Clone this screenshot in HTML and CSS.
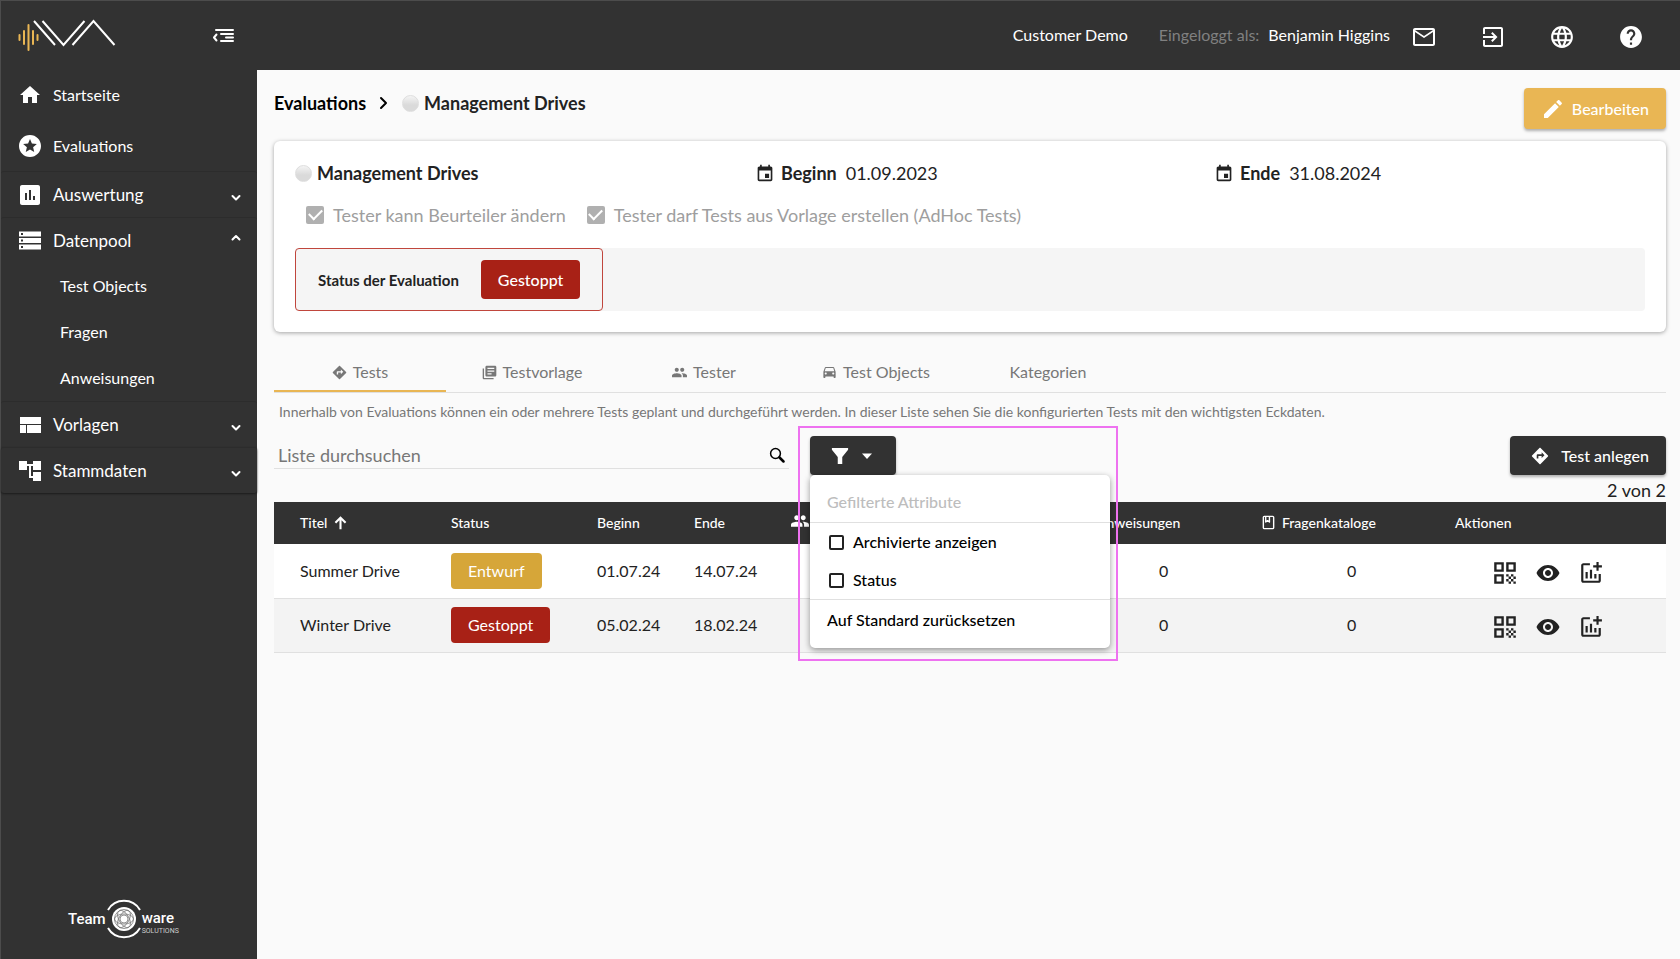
FILE: index.html
```html
<!DOCTYPE html>
<html lang="de">
<head>
<meta charset="utf-8">
<meta name="viewport" content="width=device-width, initial-scale=1">
<title>Management Drives – Evaluations</title>
<link rel="stylesheet" href="styles.css">
</head>
<body>
<svg class="sprite" aria-hidden="true">
  <symbol id="i-home" viewBox="0 0 24 24"><path d="M10 20v-6h4v6h5v-8h3L12 3 2 12h3v8z"/></symbol>
  <symbol id="i-star" viewBox="0 0 24 24"><path d="M11.99 1C5.900 1 1 5.900 1 12s4.900 11 10.990 11C18.080 23 23 18.080 23 12S18.080 1 11.990 1zm4.240 17L12 15.450 7.770 18l1.120-4.810-3.730-3.230 4.920-.42L12 5l1.920 4.530 4.920.42-3.730 3.230L16.230 18z"/></symbol>
  <symbol id="i-chart" viewBox="0 0 24 24"><path d="M20 2H4c-1.100 0-2 .9-2 2v16c0 1.100.9 2 2 2h16c1.100 0 2-.9 2-2V4c0-1.100-.9-2-2-2zM9 17H7v-7h2v7zm4 0h-2V7h2v10zm4 0h-2v-4h2v4z"/></symbol>
  <symbol id="i-storage" viewBox="0 0 24 24"><path d="M1 20.500h22v-5H1v5zm2-3.500h2v2H3v-2zM1 2.500v5h22v-5H1zM5 6H3V4h2v2zM1 14h22V9H1v5zm2-3.500h2v2H3v-2z"/></symbol>
  <symbol id="i-quilt" viewBox="0 0 24 24"><path d="M2 4h21v7H2zM2 12h6v8H2zM9 12h14v8H9z"/></symbol>
  <symbol id="i-tree" viewBox="0 0 24 24"><path d="M23 11V2h-8v3H9V2H1v9h8V7h2v12h4v3h8v-9h-8v4h-2V7h2v4z"/></symbol>
  <symbol id="i-down" viewBox="0 0 12 20"><path class="line" d="M2.500 11L6 14.500 9.500 11"/></symbol>
  <symbol id="i-up" viewBox="0 0 12 20"><path class="line" d="M2.500 8.500L6 5l3.500 3.500"/></symbol>
  <symbol id="i-collapse" viewBox="0 0 24 24"><path class="line" d="M4 7h17M9 11h12M14 14.500h7M9 18h12M4.500 11.500L2 14.500 4.500 17.500"/></symbol>
  <symbol id="i-mail" viewBox="0 0 24 24"><path d="M23 5c0-1.100-.9-2-2-2H3c-1.100 0-2 .9-2 2v14c0 1.100.9 2 2 2h18c1.100 0 2-.9 2-2V5zm-2 0l-9 6-9-6h18zm0 14H3V7l9 6 9-6v12z"/></symbol>
  <symbol id="i-exit" viewBox="0 0 24 24"><path d="M10.090 15.590L11.500 17l5-5-5-5-1.410 1.410L12.670 11H2v2h10.670l-2.580 2.590zM20 2H4c-1.110 0-2 .9-2 2v5h2V4h16v16H4v-5H2v5c0 1.100.89 2 2 2h16c1.100 0 2-.9 2-2V4c0-1.100-.9-2-2-2z"/></symbol>
  <symbol id="i-globe" viewBox="1 1 22 22"><path d="M11.990 2C6.470 2 2 6.480 2 12s4.470 10 9.990 10C17.520 22 22 17.520 22 12S17.520 2 11.990 2zm6.930 6h-2.950c-.32-1.250-.78-2.450-1.380-3.560 1.840.63 3.370 1.910 4.330 3.560zM12 4.040c.83 1.200 1.480 2.530 1.910 3.960h-3.820c.43-1.430 1.080-2.760 1.910-3.960zM4.260 14C4.100 13.360 4 12.690 4 12s.1-1.360.26-2h3.380c-.08.66-.14 1.320-.14 2 0 .68.06 1.340.14 2H4.260zm.82 2h2.950c.32 1.250.78 2.450 1.380 3.560-1.840-.63-3.370-1.900-4.330-3.560zm2.950-8H5.080c.96-1.660 2.490-2.930 4.330-3.560C8.810 5.550 8.350 6.750 8.030 8zM12 19.960c-.83-1.200-1.480-2.530-1.910-3.960h3.820c-.43 1.430-1.080 2.760-1.910 3.960zM14.340 14H9.660c-.09-.66-.16-1.320-.16-2 0-.68.07-1.350.16-2h4.680c.09.65.16 1.320.16 2 0 .68-.07 1.340-.16 2zm.25 5.560c.6-1.110 1.060-2.310 1.380-3.560h2.950c-.96 1.650-2.490 2.930-4.330 3.560zM16.360 14c.08-.66.14-1.320.14-2 0-.68-.06-1.340-.14-2h3.380c.16.64.26 1.310.26 2s-.1 1.360-.26 2h-3.380z"/></symbol>
  <symbol id="i-help" viewBox="1 1 22 22"><path d="M12 2C6.480 2 2 6.480 2 12s4.480 10 10 10 10-4.480 10-10S17.520 2 12 2zm1 17h-2v-2h2v2zm2.070-7.750l-.9.92C13.450 12.900 13 13.500 13 15h-2v-.5c0-1.100.45-2.100 1.170-2.830l1.240-1.260c.37-.36.59-.86.59-1.410 0-1.100-.9-2-2-2s-2 .9-2 2H8c0-2.210 1.790-4 4-4s4 1.790 4 4c0 .88-.36 1.680-.93 2.250z"/></symbol>
  <symbol id="i-edit" viewBox="0 0 24 24"><path d="M3 17.250V21h3.750L17.810 9.940l-3.750-3.750L3 17.250zM20.710 7.040c.39-.39.39-1.020 0-1.410l-2.340-2.340c-.39-.39-1.020-.39-1.410 0l-1.830 1.830 3.750 3.750 1.830-1.830z"/></symbol>
  <symbol id="i-event" viewBox="1 0 22 22"><path d="M17 12h-5v5h5v-5zM16 1v2H8V1H6v2H5c-1.110 0-1.990.9-1.990 2L3 19c0 1.100.89 2 2 2h14c1.100 0 2-.9 2-2V5c0-1.100-.9-2-2-2h-1V1h-2zm3 18H5V8h14v11z"/></symbol>
  <symbol id="i-directions" viewBox="1 1 22 22"><path d="M21.710 11.290l-9-9c-.39-.39-1.020-.39-1.410 0l-9 9c-.39.39-.39 1.020 0 1.410l9 9c.39.39 1.020.39 1.410 0l9-9c.39-.38.39-1.010 0-1.410zM14 14.500V12h-4v3H8v-4c0-.55.45-1 1-1h5V7.500l3.500 3.500-3.500 3.500z"/></symbol>
  <symbol id="i-books" viewBox="1 1 22 22"><path d="M4 6H2v14c0 1.100.9 2 2 2h14v-2H4V6zm16-4H8c-1.100 0-2 .9-2 2v12c0 1.100.9 2 2 2h12c1.100 0 2-.9 2-2V4c0-1.100-.9-2-2-2zm-1 9H9V9h10v2zm-4 4H9v-2h6v2zm4-8H9V5h10v2z"/></symbol>
  <symbol id="i-people" viewBox="1 1 22 22"><path d="M16 11c1.660 0 2.990-1.340 2.990-3S17.660 5 16 5c-1.660 0-3 1.340-3 3s1.340 3 3 3zm-8 0c1.660 0 2.990-1.340 2.990-3S9.660 5 8 5C6.340 5 5 6.340 5 8s1.340 3 3 3zm0 2c-2.330 0-7 1.170-7 3.500V19h14v-2.500c0-2.330-4.670-3.500-7-3.500zm8 0c-.29 0-.62.02-.97.05 1.160.84 1.970 1.970 1.970 3.450V19h6v-2.500c0-2.330-4.670-3.500-7-3.500z"/></symbol>
  <symbol id="i-car" viewBox="1 2 22 22"><path d="M18.920 6.010C18.720 5.420 18.160 5 17.500 5h-11c-.66 0-1.210.42-1.420 1.010L3 12v8c0 .55.45 1 1 1h1c.55 0 1-.45 1-1v-1h12v1c0 .55.45 1 1 1h1c.55 0 1-.45 1-1v-8l-2.080-5.990zM6.500 16c-.83 0-1.500-.67-1.500-1.500S5.670 13 6.500 13s1.500.67 1.500 1.500S7.330 16 6.500 16zm11 0c-.83 0-1.500-.67-1.500-1.500s.67-1.500 1.500-1.500 1.500.67 1.500 1.500-.67 1.500-1.500 1.500zM5 11l1.500-4.500h11L19 11H5z"/></symbol>
  <symbol id="i-search" viewBox="0 0 16 16"><circle class="line thin" cx="6.500" cy="6.500" r="4.900"/><path class="line thick" d="M10.500 10.500L14.500 14.500"/></symbol>
  <symbol id="i-funnel" viewBox="0 0 20 20"><path d="M1 1h18v2l-6.500 8v8h-5v-8L1 3z"/></symbol>
  <symbol id="i-caret" viewBox="0 0 12 12"><path d="M1 3.500h10L6 9z"/></symbol>
  <symbol id="i-eye" viewBox="0 0 24 24"><path d="M12 4C7 4 2.500 7.400.5 12c2 4.600 6.500 8 11.500 8s9.500-3.400 11.500-8C21.500 7.400 17 4 12 4zM12 17c-2.760 0-5-2.240-5-5s2.240-5 5-5 5 2.240 5 5-2.240 5-5 5zm0-8c-1.660 0-3 1.340-3 3s1.340 3 3 3 3-1.340 3-3-1.340-3-3-3z"/></symbol>
  <symbol id="i-qr" viewBox="2 2 20 20"><path d="M3 11h8V3H3v8zm2-6h4v4H5V5zM3 21h8v-8H3v8zm2-6h4v4H5v-4zM13 3v8h8V3h-8zm6 6h-4V5h4v4zM19 19h2v2h-2zM13 13h2v2h-2zM15 15h2v2h-2zM13 17h2v2h-2zM15 19h2v2h-2zM17 17h2v2h-2zM17 13h2v2h-2zM19 15h2v2h-2z"/></symbol>
  <symbol id="i-addchart" viewBox="1 1 22 22"><path d="M22 5v2h-3v3h-2V7h-3V5h3V2h2v3h3zm-3 14H5V5h6V3H5c-1.100 0-2 .9-2 2v14c0 1.100.9 2 2 2h14c1.100 0 2-.9 2-2v-6h-2v6zm-4-6v4h2v-4h-2zm-4 4h2V9h-2v8zm-2 0v-6H7v6h2z"/></symbol>
  <symbol id="i-arrowup" viewBox="3 3 18 18"><path d="M5 11.500l1.800 1.800L10.750 9.300V20h2.500V9.300l3.950 4L19 11.500l-7-7z"/></symbol>
  <symbol id="i-book" viewBox="0 0 16 16"><rect class="line thin" x="2.500" y="1.500" width="11" height="13" rx="1"/><path class="line thin" d="M5 2v5.500l2-1.500 2 1.500V2"/></symbol>
  <symbol id="i-crumb" viewBox="0 0 12 16"><path class="line" d="M3 3l5 5-5 5"/></symbol>
</svg>

<div class="app">
  <aside class="sidebar">
    <div class="brand">
      <svg class="brand-logo" viewBox="0 0 98 32" role="img" aria-label="IVVA">
        <path class="wave" d="M1.500 16v5M6 12v13M10.500 6v25M15 12v13M19.500 16v5"/>
        <path class="strokes" d="M16 2l21 24M24.500 2l21 24 21-24M54.500 26l21-24 21 24"/>
      </svg>
      <button class="icon-btn" type="button" aria-label="Menü einklappen"><svg class="icon"><use href="#i-collapse"/></svg></button>
    </div>
    <nav class="nav">
      <a class="nav-item tall" href="#"><svg class="icon"><use href="#i-home"/></svg><span>Startseite</span></a>
      <a class="nav-item tall" href="#"><svg class="icon"><use href="#i-star"/></svg><span>Evaluations</span></a>
      <a class="nav-item group" href="#"><svg class="icon"><use href="#i-chart"/></svg><span>Auswertung</span><svg class="chev"><use href="#i-down"/></svg></a>
      <a class="nav-item group" href="#"><svg class="icon"><use href="#i-storage"/></svg><span>Datenpool</span><svg class="chev"><use href="#i-up"/></svg></a>
      <a class="nav-item sub" href="#">Test Objects</a>
      <a class="nav-item sub" href="#">Fragen</a>
      <a class="nav-item sub" href="#">Anweisungen</a>
      <a class="nav-item group" href="#"><svg class="icon"><use href="#i-quilt"/></svg><span>Vorlagen</span><svg class="chev"><use href="#i-down"/></svg></a>
      <a class="nav-item group last" href="#"><svg class="icon"><use href="#i-tree"/></svg><span>Stammdaten</span><svg class="chev"><use href="#i-down"/></svg></a>
    </nav>
    <div class="maker">
      <span class="maker-word">Team</span>
      <svg class="maker-logo" viewBox="2 0 36 42" aria-hidden="true">
        <path class="arc" d="M4 12a18.500 18.500 0 0 1 32 0M4 30a18.500 18.500 0 0 0 32 0"/>
        <circle class="ball" cx="20" cy="21" r="12"/>
        <g class="orbit"><circle cx="20" cy="21" r="9.500"/><circle cx="20" cy="21" r="4"/><ellipse cx="20" cy="21" rx="9.500" ry="5"/><ellipse cx="20" cy="21" rx="9.500" ry="5" transform="rotate(60 20 21)"/><ellipse cx="20" cy="21" rx="9.500" ry="5" transform="rotate(120 20 21)"/></g>
      </svg>
      <span class="maker-end"><span class="maker-word">ware</span><small>SOLUTIONS</small></span>
    </div>
  </aside>

  <div class="page">
    <header class="topbar">
      <span class="customer">Customer Demo</span>
      <span class="login"><span class="muted">Eingeloggt als:</span> <span>Benjamin Higgins</span></span>
      <div class="top-icons">
        <button class="icon-btn" type="button" aria-label="Nachrichten"><svg class="icon"><use href="#i-mail"/></svg></button>
        <button class="icon-btn" type="button" aria-label="Abmelden"><svg class="icon"><use href="#i-exit"/></svg></button>
        <button class="icon-btn" type="button" aria-label="Sprache"><svg class="icon"><use href="#i-globe"/></svg></button>
        <button class="icon-btn" type="button" aria-label="Hilfe"><svg class="icon"><use href="#i-help"/></svg></button>
      </div>
    </header>

    <main class="content">
      <div class="page-head">
        <nav class="crumbs">
          <a href="#">Evaluations</a>
          <svg class="crumb-sep"><use href="#i-crumb"/></svg>
          <span class="named"><i class="dot"></i>Management Drives</span>
        </nav>
        <button class="btn btn-gold" type="button"><svg class="icon"><use href="#i-edit"/></svg>Bearbeiten</button>
      </div>

      <section class="card">
        <div class="facts">
          <h1 class="named"><i class="dot"></i>Management Drives</h1>
          <div class="fact"><svg class="icon-sm"><use href="#i-event"/></svg><b>Beginn</b><span>01.09.2023</span></div>
          <div class="fact"><svg class="icon-sm"><use href="#i-event"/></svg><b>Ende</b><span>31.08.2024</span></div>
        </div>
        <div class="options">
          <label class="check off"><input type="checkbox" checked disabled>Tester kann Beurteiler ändern</label>
          <label class="check off"><input type="checkbox" checked disabled>Tester darf Tests aus Vorlage erstellen (AdHoc Tests)</label>
        </div>
        <div class="status-strip">
          <div class="status-box"><b>Status der Evaluation</b><button class="status red" type="button">Gestoppt</button></div>
        </div>
      </section>

      <nav class="tabs">
        <a class="tab active" href="#"><svg class="icon-xs"><use href="#i-directions"/></svg>Tests</a>
        <a class="tab" href="#"><svg class="icon-xs"><use href="#i-books"/></svg>Testvorlage</a>
        <a class="tab" href="#"><svg class="icon-xs"><use href="#i-people"/></svg>Tester</a>
        <a class="tab" href="#"><svg class="icon-xs"><use href="#i-car"/></svg>Test Objects</a>
        <a class="tab" href="#">Kategorien</a>
      </nav>
      <p class="hint">Innerhalb von Evaluations können ein oder mehrere Tests geplant und durchgeführt werden. In dieser Liste sehen Sie die konfigurierten Tests mit den wichtigsten Eckdaten.</p>

      <div class="toolbar">
        <div class="search">
          <input type="search" placeholder="Liste durchsuchen" aria-label="Liste durchsuchen">
          <svg class="icon-sm"><use href="#i-search"/></svg>
        </div>
        <div class="filter">
          <button class="btn btn-dark btn-filter" type="button" aria-label="Filter" aria-expanded="true"><svg class="icon-sm"><use href="#i-funnel"/></svg><svg class="chev"><use href="#i-caret"/></svg></button>
          <div class="filter-menu">
            <div class="menu-title">Gefilterte Attribute</div>
            <div class="menu-group">
              <label class="check"><input type="checkbox">Archivierte anzeigen</label>
              <label class="check"><input type="checkbox">Status</label>
            </div>
            <button class="menu-reset" type="button">Auf Standard zurücksetzen</button>
          </div>
          <div class="filter-outline"></div>
        </div>
        <div class="create">
          <button class="btn btn-dark" type="button"><svg class="icon-sm"><use href="#i-directions"/></svg>Test anlegen</button>
          <div class="count">2 von 2</div>
        </div>
      </div>

      <table class="tests">
        <colgroup><col class="c-title"><col class="c-status"><col class="c-date"><col class="c-date"><col class="c-tester"><col class="c-instr"><col class="c-cat"><col class="c-act"></colgroup>
        <thead>
          <tr>
            <th>Titel<svg class="icon-xs after"><use href="#i-arrowup"/></svg></th>
            <th>Status</th>
            <th>Beginn</th>
            <th>Ende</th>
            <th><svg class="icon-sm before"><use href="#i-people"/></svg>Tester</th>
            <th><svg class="icon-sm before"><use href="#i-directions"/></svg>Anweisungen</th>
            <th><svg class="icon-xs before"><use href="#i-book"/></svg>Fragenkataloge</th>
            <th>Aktionen</th>
          </tr>
        </thead>
        <tbody>
          <tr>
            <td>Summer Drive</td><td><button class="status gold" type="button">Entwurf</button></td><td>01.07.24</td><td>14.07.24</td><td></td><td class="num">0</td><td class="num">0</td>
            <td><div class="actions"><button class="icon-btn" type="button" aria-label="QR-Code"><svg class="icon"><use href="#i-qr"/></svg></button><button class="icon-btn" type="button" aria-label="Ansehen"><svg class="icon"><use href="#i-eye"/></svg></button><button class="icon-btn" type="button" aria-label="Auswertung anlegen"><svg class="icon"><use href="#i-addchart"/></svg></button></div></td>
          </tr>
          <tr>
            <td>Winter Drive</td><td><button class="status red" type="button">Gestoppt</button></td><td>05.02.24</td><td>18.02.24</td><td></td><td class="num">0</td><td class="num">0</td>
            <td><div class="actions"><button class="icon-btn" type="button" aria-label="QR-Code"><svg class="icon"><use href="#i-qr"/></svg></button><button class="icon-btn" type="button" aria-label="Ansehen"><svg class="icon"><use href="#i-eye"/></svg></button><button class="icon-btn" type="button" aria-label="Auswertung anlegen"><svg class="icon"><use href="#i-addchart"/></svg></button></div></td>
          </tr>
        </tbody>
      </table>
    </main>
  </div>
</div>
</body>
</html>
```
FILE: styles.css
```css
:root {
  --dark: #323232;
  --gold: #e9b654;
  --red: #a82116;
  --line: #e0e0e0;
  --grey: #777;
}
* { box-sizing: border-box; }
body {
  margin: 0;
  background: #fafafa;
  color: #222;
  font: 16px/24px Lato, "Open Sans", sans-serif;
}
a { color: inherit; text-decoration: none; }
button { font: inherit; color: inherit; cursor: pointer; border: 0; background: none; padding: 0; }
.sprite { position: absolute; width: 0; height: 0; }
svg { display: block; flex: none; fill: currentColor; }
.line { fill: none; stroke: currentColor; stroke-width: 2; stroke-linecap: round; stroke-linejoin: round; }
.line.thin { stroke-width: 1.500; }
.line.thick { stroke-width: 2.500; }
.icon { width: 24px; height: 24px; }
.icon-sm { width: 18px; height: 18px; }
.icon-xs { width: 15px; height: 15px; }
.chev { width: 12px; height: 12px; }
.icon-btn { display: flex; }

.app { display: flex; min-height: 100vh; }

/* Sidebar */
.sidebar {
  flex: none;
  display: flex;
  flex-direction: column;
  width: 257px;
  background: var(--dark);
  border-left: 1px solid #4c4c4c;
  border-top: 1px solid #4c4c4c;
  color: #fff;
}
.brand { display: flex; align-items: center; justify-content: space-between; height: 68px; padding: 0 21px 0 17px; }
.brand-logo { width: 98px; height: 32px; }
.wave { fill: none; stroke: var(--gold); stroke-width: 2; stroke-linecap: round; }
.strokes { fill: none; stroke: #fff; stroke-width: 2; }
.nav-item { display: flex; align-items: center; gap: 11px; height: 46px; padding: 0 15px 0 17px; }
.nav-item.tall { height: 51px; }
.nav-item.group { border-top: 1px solid #2c2c2c; border-radius: 3px; font-size: 17px; }
.nav-item.group .chev { height: 20px; margin-left: auto; }
.nav-item.last { box-shadow: 0 1px 2px #1c1c1c; }
.nav-item.sub { padding-left: 59px; }
.maker { display: flex; align-items: center; margin: auto 0 19px 67px; }
.maker-word { font: 500 15px/18px Roboto, sans-serif; }
.maker-logo { width: 36px; height: 42px; }
.arc { fill: none; stroke: #fff; stroke-width: 2; }
.ball { fill: #fff; }
.orbit { fill: none; stroke: #777; stroke-width: 0.800; }
.maker-end { display: flex; flex-direction: column; padding-top: 6px; }
.maker-end small { font: 7px/8px Roboto, sans-serif; color: #ccc; }

/* Top bar */
.page { flex: 1; min-width: 0; }
.topbar {
  display: flex;
  align-items: center;
  justify-content: flex-end;
  height: 70px;
  padding-right: 37px;
  background: var(--dark);
  border-top: 1px solid #4c4c4c;
  color: #fff;
}
.customer, .login { padding-bottom: 2px; }
.login { display: flex; gap: 9px; margin: 0 22px 0 31px; }
.muted { color: #808080; }
.top-icons { display: flex; gap: 45px; padding-top: 2px; }

/* Content */
.content { padding: 18px 14px 0 17px; }
.page-head { display: flex; align-items: flex-start; justify-content: space-between; margin-bottom: 12px; }
.crumbs { display: flex; align-items: center; gap: 12px; padding-top: 3px; font-size: 18px; font-weight: 700; color: #000; }
.crumb-sep { width: 12px; height: 16px; }
.named { display: flex; align-items: center; gap: 5px; margin: 0; font-size: 18px; line-height: 24px; font-weight: 700; color: #222; }
.dot { width: 17px; height: 17px; border-radius: 50%; background: linear-gradient(#f4f4f4, #dadada 60%); border: 1px solid #dedede; }
.btn {
  display: flex;
  align-items: center;
  border-radius: 4px;
  color: #fff;
  font-weight: 500;
  box-shadow: 0 2px 3px rgba(0, 0, 0, .3);
}
.btn-gold { gap: 7px; height: 41px; padding: 0 17px; background: var(--gold); }
.btn-dark { gap: 12px; height: 39px; padding: 0 17px 0 21px; background: var(--dark); }

.card { padding: 20px 21px 21px; background: #fff; border-radius: 6px; box-shadow: 0 1px 4px rgba(0, 0, 0, .35); }
.facts { display: grid; grid-template-columns: 34% 34% 1fr; align-items: center; }
.fact { display: flex; align-items: center; gap: 7px; padding-left: 2px; font-size: 18px; }
.fact span { margin-left: 2px; }
.options { display: flex; gap: 21px; padding: 18px 0 0 11px; }
.check { display: flex; align-items: center; gap: 9px; }
.check.off { color: #9e9e9e; font-size: 18px; }
.check input { appearance: none; display: grid; place-items: center; width: 15px; height: 15px; margin: 0; border: 2px solid #222; border-radius: 2px; }
.check.off input { width: 18px; height: 18px; border: 0; background: #b0b0b0; }
.check.off input::after { content: ""; width: 11px; height: 6px; border: solid #fff; border-width: 0 0 2px 2px; transform: translateY(-2px) rotate(-45deg); }
.status-strip { display: flex; margin-top: 21px; background: #f5f5f5; border-radius: 4px; }
.status-box { display: flex; align-items: center; gap: 22px; height: 63px; padding: 0 22px; border: 1px solid #c0463d; border-radius: 4px; }
.status-box b { font-size: 15px; }
.status { height: 36px; padding: 0 17px; border-radius: 4px; color: #fff; }
.status-box .status { height: 39px; font-weight: 500; }
.red { background: var(--red); }
.gold { background: #d6a639; }

/* Tabs */
.tabs { display: flex; margin-top: 22px; border-bottom: 1px solid var(--line); }
.tab { display: flex; align-items: center; justify-content: center; gap: 6px; width: 172px; height: 38px; border-bottom: 2px solid transparent; color: var(--grey); }
.tab.active { border-color: var(--gold); }
.hint { margin: 9px 5px 14px; font-size: 14px; line-height: 20px; color: var(--grey); }

/* Toolbar */
.toolbar { display: flex; align-items: flex-start; }
.search { display: flex; align-items: center; flex: 0 1 515px; height: 33px; padding: 5px 4px 0 0; border-bottom: 1px solid var(--line); }
.search input { flex: 1; min-width: 0; padding: 0 4px; border: 0; outline: 0; background: none; font: inherit; font-size: 18px; }
.search input::placeholder { color: var(--grey); }
.search svg { color: #000; width: 16px; height: 16px; }
.filter { position: relative; margin-left: 21px; }
.btn-filter { width: 86px; }
.filter-menu {
  position: absolute;
  z-index: 2;
  top: 39px;
  left: 0;
  width: 300px;
  padding: 15px 0 16px;
  background: #fff;
  border-radius: 5px;
  box-shadow: 0 2px 6px rgba(0, 0, 0, .4);
  color: #000;
  font-weight: 500;
}
.menu-title { padding: 0 17px 8px; color: #bdbdbd; }
.menu-group { border: solid var(--line); border-width: 1px 0; }
.menu-group .check { height: 38px; padding: 0 19px; }
.menu-reset { display: block; padding: 8px 17px 0; }
.filter-outline { position: absolute; z-index: 3; top: -10px; left: -12px; width: 320px; height: 235px; border: 2px solid #ee72f0; pointer-events: none; }
.create { margin-left: auto; }
.count { margin-top: 4px; text-align: right; font-size: 18px; line-height: 23px; }

/* Table */
.tests { width: 100%; table-layout: fixed; border-collapse: collapse; }
.tests th { height: 42px; padding: 0; background: var(--dark); color: #fff; font-size: 14px; font-weight: 500; text-align: left; }
.tests th svg { display: inline-block; vertical-align: -2px; }
.tests .after { margin-left: 6px; }
.tests .before { margin-right: 6px; }
.tests td { height: 54px; padding: 0; border-bottom: 1px solid var(--line); }
.tests th:first-child, .tests td:first-child { padding-left: 26px; }
.tests tbody tr { background: #fff; }
.tests tbody tr:nth-child(even) { background: #f3f3f3; }
.tests .num { padding-left: 86px; }
.c-title { width: 177px; }
.c-status { width: 146px; }
.c-date { width: 97px; }
.c-tester { width: 282px; }
.c-instr { width: 188px; }
.c-cat { width: 194px; }
.actions { display: flex; gap: 19px; padding: 4px 0 0 38px; }
```
